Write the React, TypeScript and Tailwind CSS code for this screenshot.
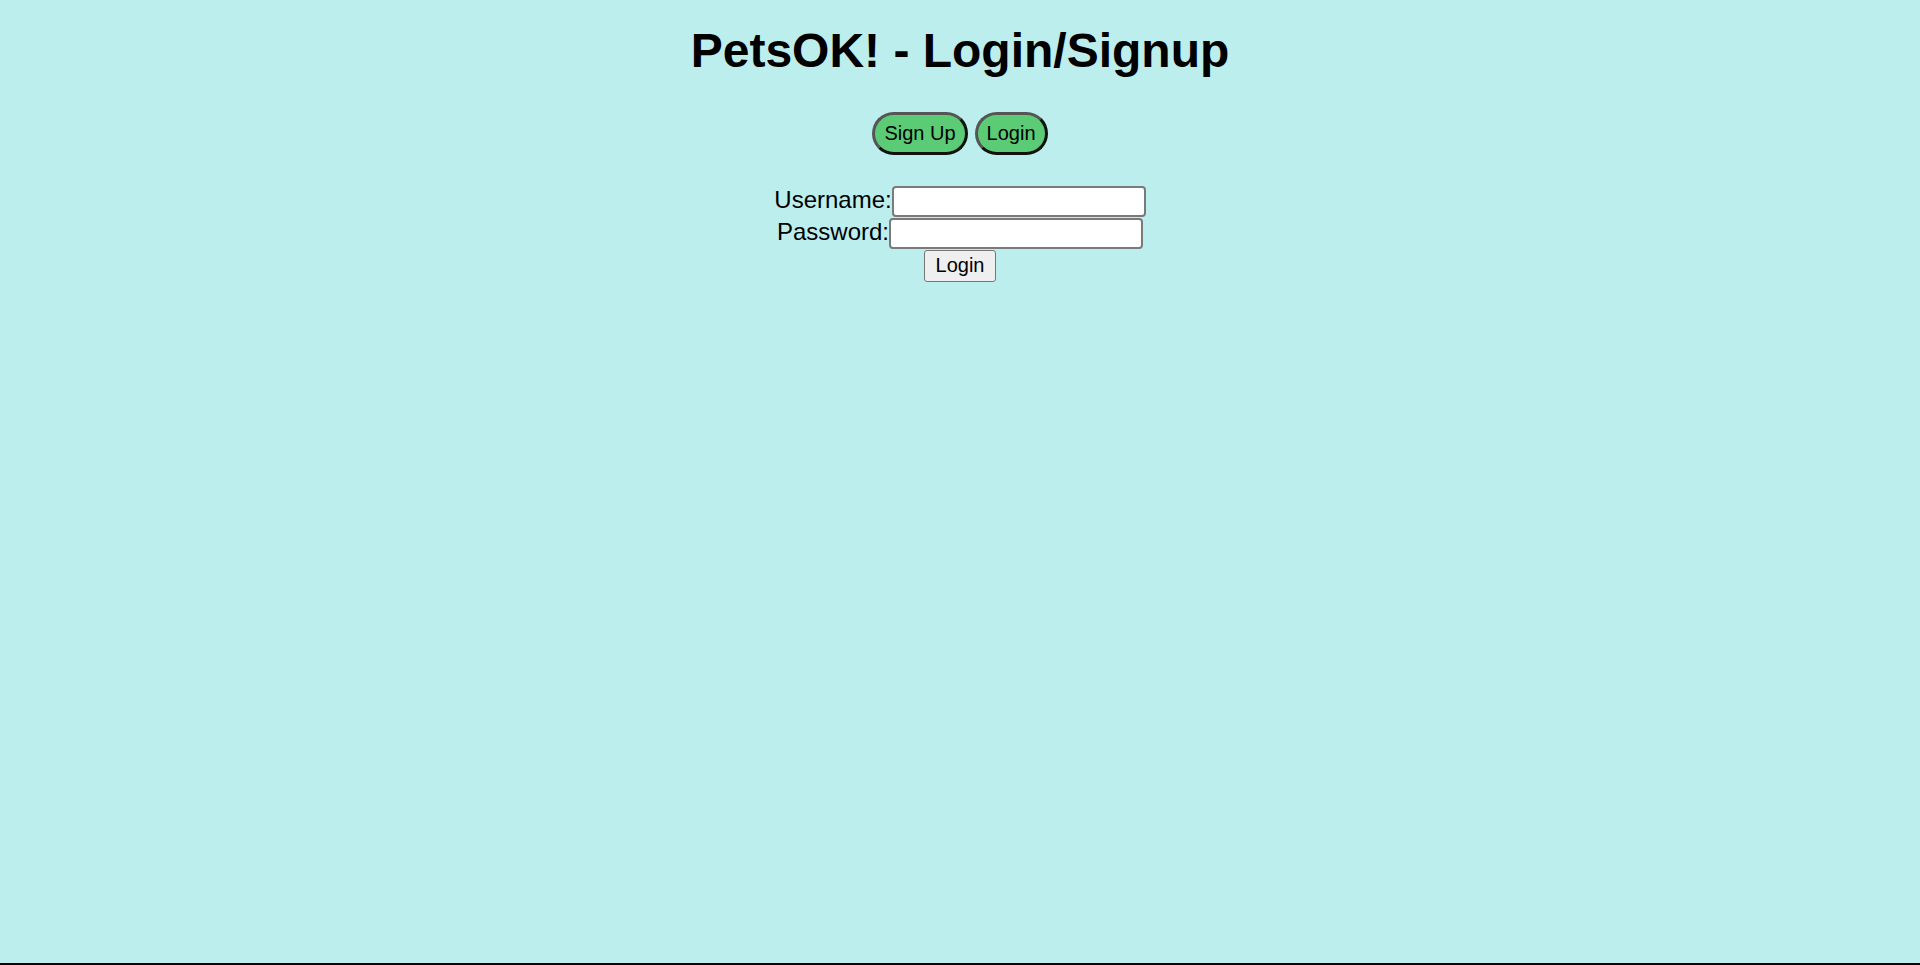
export default function App() {
  return (
    <div className="min-h-screen box-border bg-[#bdeeee] border-b-2 border-black flex flex-col items-center text-black font-['Liberation_Sans',Arial,sans-serif]">
      <h1 className="mt-[23px] text-[48px] leading-[55px] font-bold">PetsOK! - Login/Signup</h1>
      <div className="mt-[33.7px] flex gap-[7px]">
        <button className="rounded-full bg-[#5ccb75] border-[3px] border-t-[#555] border-l-[#555] border-b-[#111] border-r-[#111] px-[9px] py-[7px] text-[20px] leading-[23.5px] text-black">
          Sign Up
        </button>
        <button className="rounded-full bg-[#5ccb75] border-[3px] border-t-[#555] border-l-[#555] border-b-[#111] border-r-[#111] px-[9px] py-[7px] text-[20px] leading-[23.5px] text-black">
          Login
        </button>
      </div>
      <form className="mt-[30.8px] flex flex-col items-center" onSubmit={(e) => e.preventDefault()}>
        <div className="flex items-start h-[32.1px]">
          <label className="text-[24px] leading-[28.5px]">Username:</label>
          <input type="text" className="w-[254px] h-[31.3px] bg-white border-2 border-[#7a7a7a] rounded-[4px] px-[3px] text-[20px] outline-none" />
        </div>
        <div className="flex items-start h-[31.8px]">
          <label className="text-[24px] leading-[28.5px]">Password:</label>
          <input type="password" className="w-[254px] h-[31px] bg-white border-2 border-[#7a7a7a] rounded-[4px] px-[3px] text-[20px] outline-none" />
        </div>
        <button type="submit" className="bg-[#efefef] border border-[#767676] rounded-[3px] px-[10.5px] py-[3.35px] text-[20px] leading-[23px] text-black">
          Login
        </button>
      </form>
    </div>
  );
}
